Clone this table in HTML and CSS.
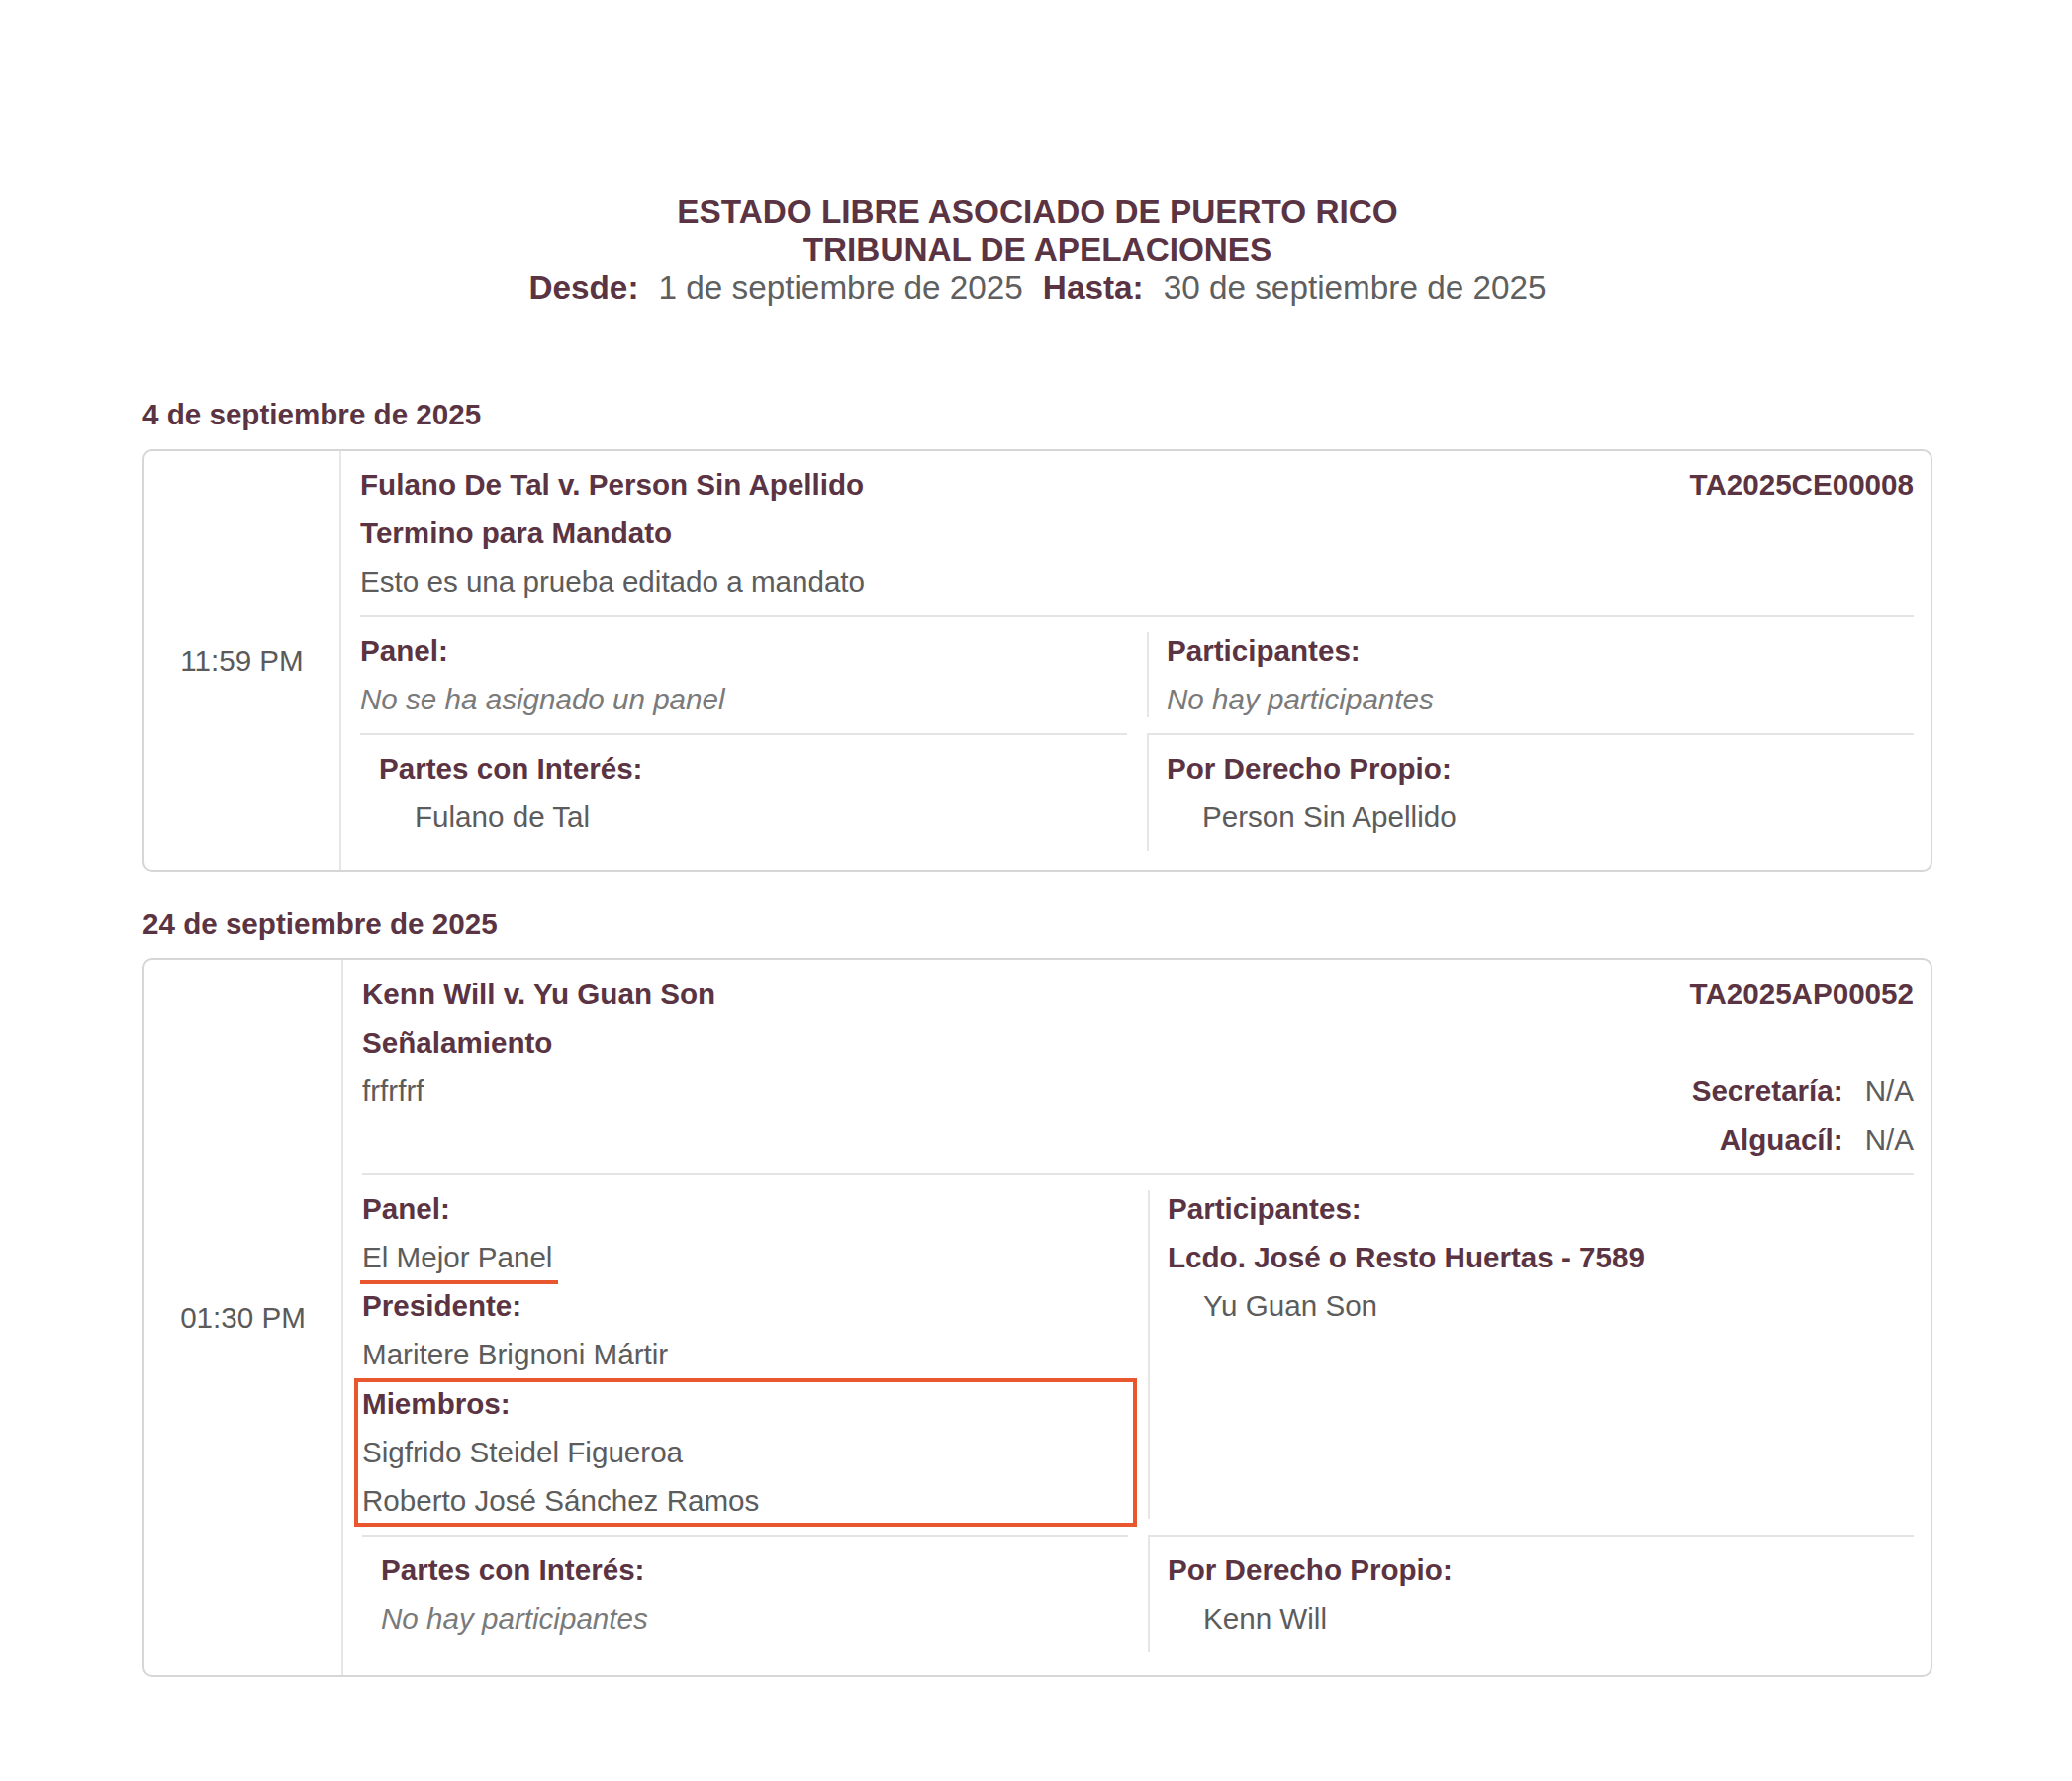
FILE: index.html
```html
<!DOCTYPE html>
<html lang="es">
<head>
<meta charset="utf-8">
<title>Tribunal de Apelaciones - Calendario</title>
<link rel="stylesheet" href="styles.css">
</head>
<body>
<div class="page">
  <header class="report-head">
    <div class="title">ESTADO LIBRE ASOCIADO DE PUERTO RICO</div>
    <div class="title">TRIBUNAL DE APELACIONES</div>
    <div class="range">
      <span class="lbl">Desde:</span><span class="val">1 de septiembre de 2025</span>
      <span class="lbl">Hasta:</span><span class="val">30 de septiembre de 2025</span>
    </div>
  </header>

  <section class="day first">
    <h2 class="day-title">4 de septiembre de 2025</h2>
    <div class="card">
      <div class="time">11:59 PM</div>
      <div class="body">
        <div class="head">
          <div class="stack">
            <div class="strong">Fulano De Tal v. Person Sin Apellido</div>
            <div class="strong">Termino para Mandato</div>
            <div class="text">Esto es una prueba editado a mandato</div>
          </div>
          <div class="stack right">
            <div class="strong">TA2025CE00008</div>
          </div>
        </div>
        <div class="grid mid">
          <div class="col stack">
            <div class="strong">Panel:</div>
            <div class="muted">No se ha asignado un panel</div>
          </div>
          <div class="col col-r stack">
            <div class="strong">Participantes:</div>
            <div class="muted">No hay participantes</div>
          </div>
        </div>
        <div class="grid bottom">
          <div class="col col-b stack">
            <div class="strong">Partes con Interés:</div>
            <div class="text indent">Fulano de Tal</div>
          </div>
          <div class="col col-b col-r stack">
            <div class="strong">Por Derecho Propio:</div>
            <div class="text indent">Person Sin Apellido</div>
          </div>
        </div>
      </div>
    </div>
  </section>

  <section class="day">
    <h2 class="day-title">24 de septiembre de 2025</h2>
    <div class="card card-tall">
      <div class="time">01:30 PM</div>
      <div class="body">
        <div class="head">
          <div class="stack">
            <div class="strong">Kenn Will v. Yu Guan Son</div>
            <div class="strong">Señalamiento</div>
            <div class="text">frfrfrf</div>
          </div>
          <div class="stack right">
            <div class="strong">TA2025AP00052</div>
            <div class="blank"></div>
            <div><span class="strong">Secretaría:</span><span class="text pair">N/A</span></div>
            <div><span class="strong">Alguacíl:</span><span class="text pair">N/A</span></div>
          </div>
        </div>
        <div class="grid mid">
          <div class="col stack">
            <div class="strong">Panel:</div>
            <div class="text"><span class="marked">El Mejor Panel</span></div>
            <div class="strong">Presidente:</div>
            <div class="text">Maritere Brignoni Mártir</div>
            <div class="stack boxed">
              <div class="strong">Miembros:</div>
              <div class="text">Sigfrido Steidel Figueroa</div>
              <div class="text">Roberto José Sánchez Ramos</div>
            </div>
          </div>
          <div class="col col-r stack">
            <div class="strong">Participantes:</div>
            <div class="strong">Lcdo. José o Resto Huertas - 7589</div>
            <div class="text indent">Yu Guan Son</div>
          </div>
        </div>
        <div class="grid bottom">
          <div class="col col-b stack">
            <div class="strong">Partes con Interés:</div>
            <div class="muted">No hay participantes</div>
          </div>
          <div class="col col-b col-r stack">
            <div class="strong">Por Derecho Propio:</div>
            <div class="text indent">Kenn Will</div>
          </div>
        </div>
      </div>
    </div>
  </section>
</div>
</body>
</html>
```
FILE: styles.css
```css
* { box-sizing: border-box; }

body {
  margin: 0;
  background: #ffffff;
  font-family: "Liberation Sans", Arial, Helvetica, sans-serif;
  color: #5a5a5a;
}

.page {
  width: 1809px;
  margin-left: 144px;
  padding-top: 195px;
  padding-bottom: 100px;
}

.report-head {
  text-align: center;
  color: #5b3443;
  font-size: 33.3px;
  line-height: 38.5px;
}

.title {
  font-weight: bold;
}

.range {
  display: flex;
  justify-content: center;
  gap: 20px;
}

.range .lbl { font-weight: bold; color: #5b3443; }
.range .val { color: #5f5f5f; }

.day { margin-top: 34px; }
.day.first { margin-top: 89px; }

.day-title {
  margin: 0 0 16px 0;
  font-size: 29.6px;
  line-height: 37px;
  font-weight: bold;
  color: #5b3443;
}

.day.first .day-title { margin-bottom: 17px; }

.card {
  display: flex;
  border: 2px solid #d6d6d6;
  border-radius: 10px;
  font-size: 29.6px;
  line-height: 37px;
}

.time {
  width: 199px;
  flex: none;
  display: flex;
  align-items: center;
  justify-content: center;
  border-right: 2px solid #e6e6e6;
  color: #5a5a5a;
}

.card-tall .time { width: 201px; }

.body {
  flex: 1;
  padding: 15px 17px 19px 19px;
}

.card-tall .body {
  padding-top: 16px;
  padding-bottom: 23px;
}

.stack {
  display: flex;
  flex-direction: column;
  gap: 12px;
}

.card-tall .mid .stack { gap: 12.3px; }

.strong { font-weight: bold; color: #5b3443; }
.text { color: #5c5c5c; }
.muted { color: #7a7a7a; font-style: italic; }
.indent { padding-left: 36px; }
.blank { height: 37px; }
.pair { margin-left: 22px; }

.head {
  display: flex;
  justify-content: space-between;
  padding-bottom: 16px;
  border-bottom: 2px solid #e4e4e4;
}

.right { text-align: right; }

.grid {
  display: grid;
  grid-template-columns: 1fr 1fr;
  column-gap: 20px;
}

.mid { margin-top: 15px; }
.bottom { margin-top: 16px; }

.col-r {
  border-left: 2px solid #e6e6e6;
  padding-left: 18px;
}

.col-b {
  border-top: 2px solid #e4e4e4;
  padding-top: 15px;
  padding-bottom: 16px;
}

.col-b:first-child { padding-left: 19px; }

.marked {
  position: relative;
}

.marked::after {
  content: "";
  position: absolute;
  left: -2px;
  right: -6px;
  top: calc(100% + 7px);
  height: 4px;
  background: #e9572f;
}

.boxed {
  position: relative;
}

.boxed::after {
  content: "";
  position: absolute;
  top: -7px;
  bottom: -8px;
  left: -8px;
  right: -9px;
  border: 4px solid #e9572f;
  pointer-events: none;
}
```
